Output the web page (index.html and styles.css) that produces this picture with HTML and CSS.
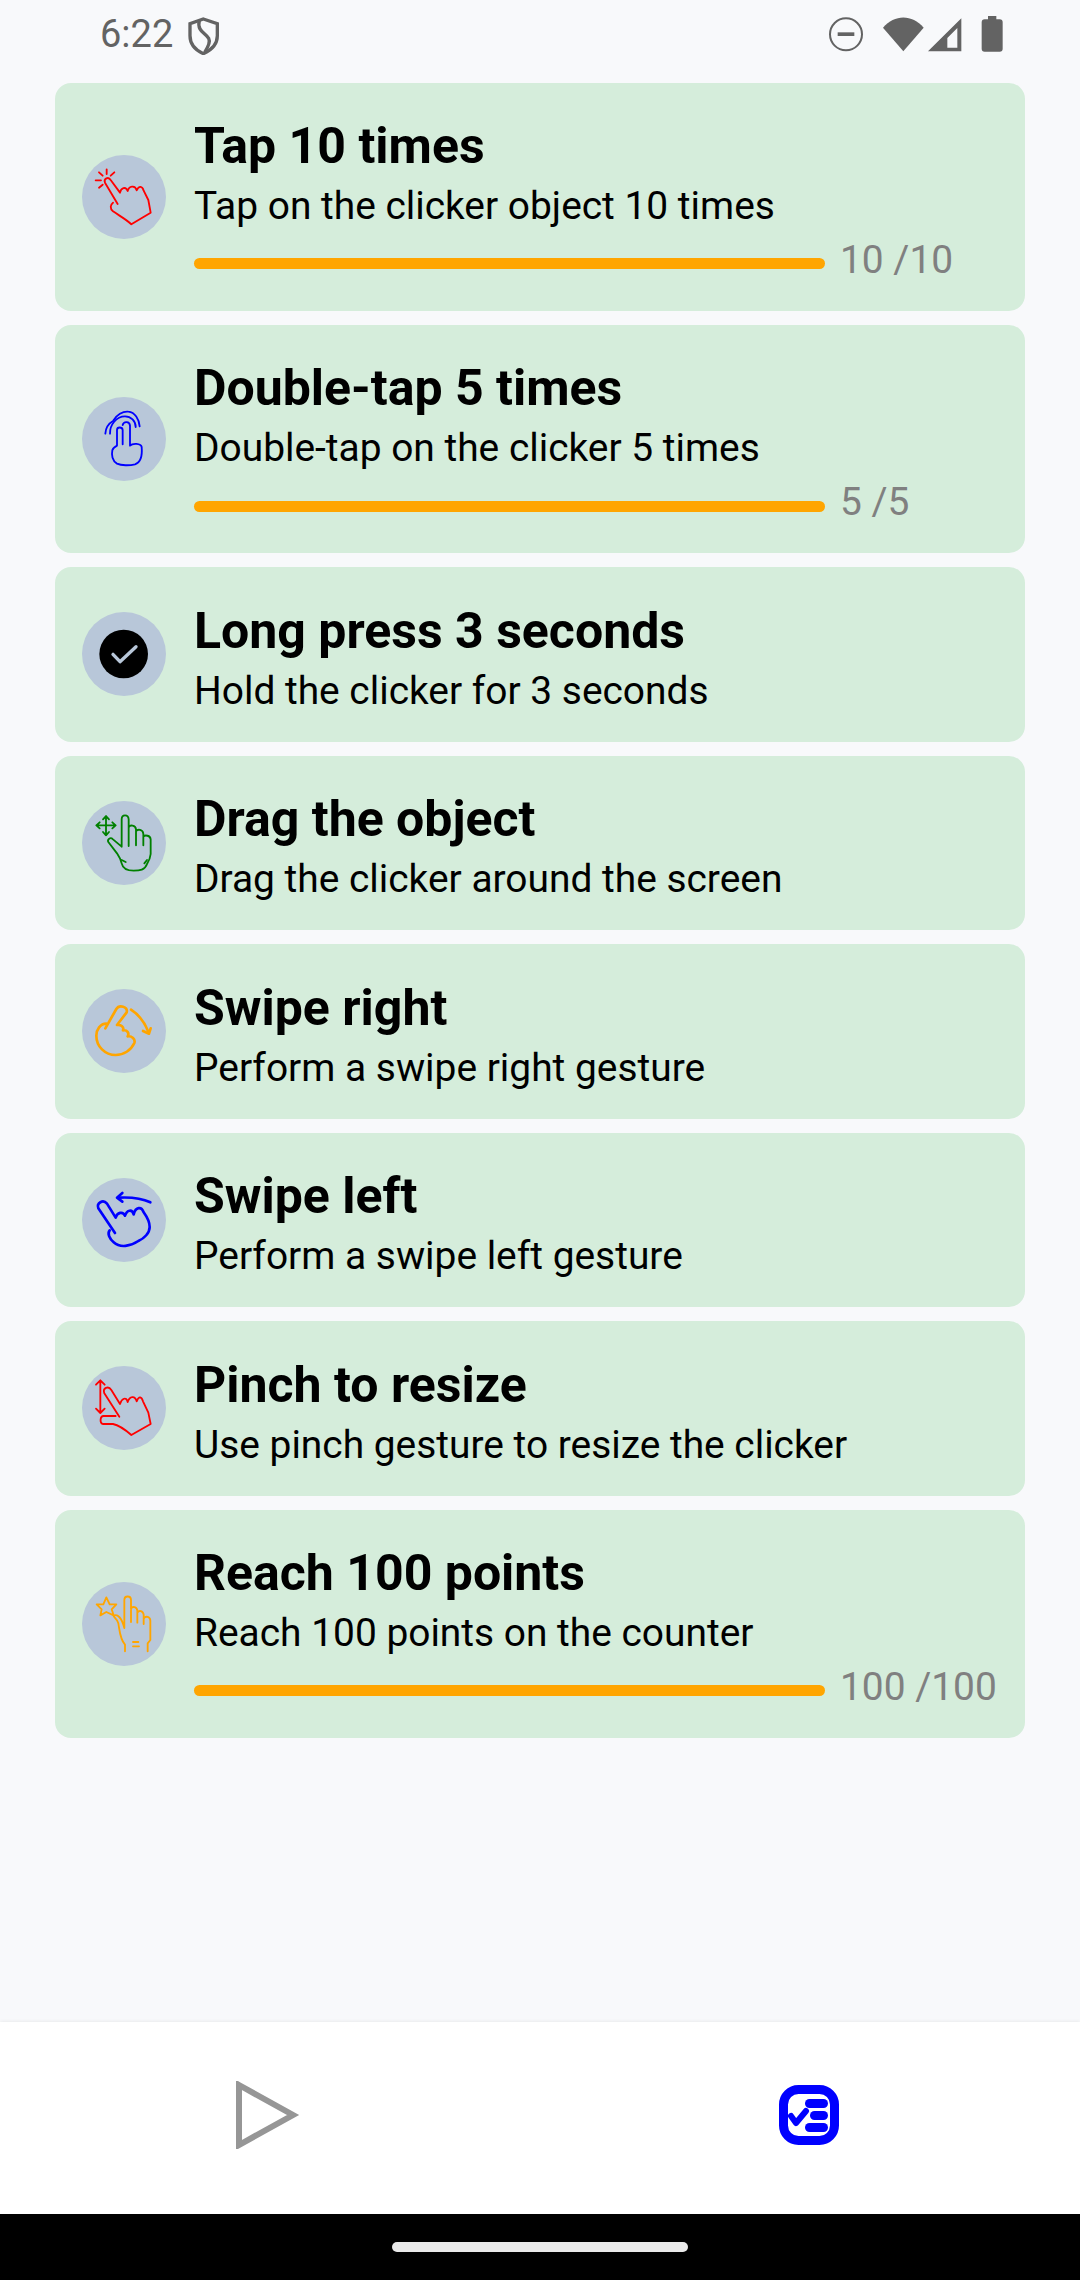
FILE: index.html
```html
<!DOCTYPE html>
<html lang="en">
<head>
    <meta charset="UTF-8">
    <title>Achievements</title>
    <link rel="stylesheet" href="styles.css">
</head>
<body>
    <div class="screen">
        <div class="status-bar">
            <span class="time">6:22</span>
            <svg class="shield" viewBox="326 48 96 114">
                <path d="M372 54 L414 68 V104 C414 130 394 148 372 158 C350 148 332 130 332 104 V68 Z" fill="none" stroke="#636363" stroke-width="10"/>
                <path d="M360 58 C352 90 378 96 388 112 C394 124 384 142 376 154" fill="none" stroke="#636363" stroke-width="10"/>
            </svg>
            <svg class="status-icons" viewBox="268 48 522 108">
                <circle cx="319" cy="103" r="48" fill="none" stroke="#636363" stroke-width="6"/>
                <rect x="294" y="97" width="50" height="11" fill="#636363"/>
                <path d="M430 83 C465 42 517 42 552 83 L491 154 Z" fill="#636363"/>
                <path d="M665 55 V154 H565 Z M653 84 L623 114 V143 H653 Z" fill="#636363" fill-rule="evenodd"/>
                <path d="M745 48 H770 V58 H780 Q789 58 789 67 V146 Q789 155 780 155 H735 Q726 155 726 146 V67 Q726 58 735 58 H745 Z" fill="#636363"/>
            </svg>
        </div>

        <div class="list">
            <div class="card">
                <div class="badge">
                    <svg viewBox="67 75 252 252" class="ico ico-red">
                        <path d="M174 222 L136 158 C131 146 146 138 153 150 L181 188 C184 174 198 168 204 183 C208 168 226 164 231 181 C238 166 248 168 252 182 L266 210 L273 248 L215 283 C200 268 180 258 160 244 C150 236 152 224 160 218"/>
                        <path d="M141 118 V132 M118 127 L129 137 M164 127 L153 137 M108 151 H124 M118 173 L129 164"/>
                    </svg>
                </div>
                <div class="info">
                    <div class="title">Tap 10 times</div>
                    <div class="desc">Tap on the clicker object 10 times</div>
                    <div class="progress-row">
                        <div class="bar"></div>
                        <span class="count">10 /10</span>
                    </div>
                </div>
            </div>

            <div class="card">
                <div class="badge">
                    <svg viewBox="67 66 252 252" class="ico ico-blue">
                        <path d="M172 210 V165 C172 155 188 155 189 165 V208 M189 150 C192 138 210 138 211 152 V212 C218 204 244 204 246 216 C248 240 244 262 226 268 C210 272 185 272 172 266 C158 258 155 240 158 226 C160 218 168 214 172 212"/>
                        <path d="M151 176 C150 150 170 124 196 124 C214 124 228 138 228 156"/>
                        <path d="M137 176 C138 160 146 146 160 138 C170 120 190 108 206 110 C226 112 238 132 240 154"/>
                    </svg>
                </div>
                <div class="info">
                    <div class="title">Double-tap 5 times</div>
                    <div class="desc">Double-tap on the clicker 5 times</div>
                    <div class="progress-row">
                        <div class="bar"></div>
                        <span class="count">5 /5</span>
                    </div>
                </div>
            </div>

            <div class="card">
                <div class="badge">
                    <svg viewBox="67 66 252 252" class="ico">
                        <circle cx="192" cy="192" r="73" fill="#000" stroke="none"/>
                        <path d="M160 193 L181 215 L229 170" stroke="#b8c7d9" stroke-width="10" stroke-linecap="round" stroke-linejoin="round"/>
                    </svg>
                </div>
                <div class="info">
                    <div class="title">Long press 3 seconds</div>
                    <div class="desc">Hold the clicker for 3 seconds</div>
                </div>
            </div>

            <div class="card">
                <div class="badge">
                    <svg viewBox="67 75 252 252" class="ico ico-green">
                        <path d="M186 212 V130 C186 114 206 114 207 130 V210 M207 154 C210 146 228 146 229 160 V208 M229 166 C234 158 250 160 251 174 V208 M251 182 C256 176 272 178 273 190 V234 C272 246 268 254 262 264 C256 282 240 284 222 284 C204 284 190 280 186 262 C184 252 180 244 172 232 L146 198 C142 190 152 182 160 190 L186 212"/>
                        <path d="M186 252 L198 258 M262 252 L254 262"/>
                        <path d="M139 122 V178 M110 148 H168 M130 130 L139 120 L148 130 M130 168 L139 178 L148 168 M120 139 L110 148 L120 157 M158 139 L168 148 L158 157"/>
                    </svg>
                </div>
                <div class="info">
                    <div class="title">Drag the object</div>
                    <div class="desc">Drag the clicker around the screen</div>
                </div>
            </div>

            <div class="card">
                <div class="badge">
                    <svg viewBox="67 72 252 252" class="ico ico-orange ico-thick">
                        <path d="M137 190 L170 132 C178 118 206 124 201 142 L172 180 C184 178 194 186 190 196 C202 194 210 204 204 214 C216 212 228 222 224 234 C214 256 192 270 168 270 C136 270 110 244 110 212 C110 194 122 176 140 176"/>
                        <path d="M214 134 C236 148 254 170 266 200"/>
                        <path d="M250 198 L268 206 L273 190"/>
                    </svg>
                </div>
                <div class="info">
                    <div class="title">Swipe right</div>
                    <div class="desc">Perform a swipe right gesture</div>
                </div>
            </div>

            <div class="card">
                <div class="badge">
                    <svg viewBox="67 69 252 252" class="ico ico-blue ico-thick">
                        <path d="M166 234 L116 160 C110 144 130 132 142 146 L168 188 C172 172 190 168 196 182 C202 164 218 162 222 178 C228 154 246 154 252 172 C262 186 270 200 270 216 C270 234 254 250 236 258 C212 274 182 280 162 262 C150 252 142 236 150 226"/>
                        <path d="M272 142 C246 130 216 126 178 128"/>
                        <path d="M188 114 L172 128 L188 140"/>
                    </svg>
                </div>
                <div class="info">
                    <div class="title">Swipe left</div>
                    <div class="desc">Perform a swipe left gesture</div>
                </div>
            </div>

            <div class="card">
                <div class="badge">
                    <svg viewBox="67 66 252 252" class="ico ico-red">
                        <path d="M179 218 L134 148 C128 132 146 124 155 138 L181 180 C186 164 200 156 204 174 C210 156 226 154 231 172 C238 154 246 158 250 172 L266 206 L273 240 L215 273 C200 260 180 244 160 240 H130 C120 240 120 216 132 216 H168"/>
                        <path d="M122 112 V204 M109 122 L122 109 L135 122 M109 194 L122 207 L135 194"/>
                    </svg>
                </div>
                <div class="info">
                    <div class="title">Pinch to resize</div>
                    <div class="desc">Use pinch gesture to resize the clicker</div>
                </div>
            </div>

            <div class="card">
                <div class="badge">
                    <svg viewBox="67 66 252 252" class="ico ico-orange">
                        <path d="M194 204 V120 C194 106 214 106 214 120 V186 M214 146 C218 138 232 140 233 152 V188 M233 158 C238 150 250 152 252 164 V192 M252 176 C258 166 272 170 272 182 V240 L264 250 V274 M196 274 V254 C180 236 180 210 176 190 C172 176 160 170 162 168 C172 160 186 172 194 204"/>
                        <path d="M220 246 H236 M220 259 H238"/>
                        <path d="M140 112 L150 133 L170 133 L156 148 L162 166 L140 156 L122 166 L126 148 L111 133 L131 133 Z"/>
                    </svg>
                </div>
                <div class="info">
                    <div class="title">Reach 100 points</div>
                    <div class="desc">Reach 100 points on the counter</div>
                    <div class="progress-row">
                        <div class="bar"></div>
                        <span class="count">100 /100</span>
                    </div>
                </div>
            </div>
        </div>

        <div class="bottom-nav">
            <svg class="nav-play" viewBox="0 0 64 68">
                <path d="M3 4 L57 34 L3 64 Z" fill="none" stroke="#969696" stroke-width="6"/>
            </svg>
            <svg class="nav-tasks" viewBox="0 0 60 60">
                <rect x="4.5" y="4.5" width="51" height="51" rx="15" fill="none" stroke="#0000ff" stroke-width="9"/>
                <rect x="26" y="14" width="23" height="9" rx="4.5" fill="#0000ff"/>
                <rect x="31" y="26" width="18" height="9" rx="4.5" fill="#0000ff"/>
                <rect x="26" y="38" width="23" height="9" rx="4.5" fill="#0000ff"/>
                <path d="M12 31 L17 38 L27 26" fill="none" stroke="#0000ff" stroke-width="6" stroke-linecap="round" stroke-linejoin="round"/>
            </svg>
        </div>

        <div class="gesture-bar">
            <div class="handle"></div>
        </div>
    </div>
</body>
</html>
```

FILE: styles.css
```css
* {
    box-sizing: border-box;
}
body {
    margin: 0;
    font-family: 'Roboto', sans-serif;
    background: #f8f9fb;
}
.screen {
    width: 1080px;
    height: 2280px;
    display: flex;
    flex-direction: column;
}
.status-bar {
    height: 83px;
    padding: 15px 77px 0 100px;
    display: flex;
    align-items: flex-start;
    flex-shrink: 0;
}
.time {
    font-size: 38px;
    line-height: 38px;
    color: #636363;
}
.shield {
    width: 32px;
    height: 38px;
    margin-left: 15px;
    margin-top: 2px;
}
.status-icons {
    width: 174px;
    height: 36px;
    margin-top: 1px;
    margin-left: auto;
}
.list {
    flex: 1;
    padding: 0 55px;
    display: flex;
    flex-direction: column;
    gap: 14.2px;
}
.card {
    background: #d5eddb;
    border-radius: 16px;
    padding: 30px 16px 30px 27px;
    display: flex;
    align-items: center;
    gap: 28px;
}
.badge {
    width: 84px;
    height: 84px;
    border-radius: 50%;
    background: #b8c7d9;
    flex-shrink: 0;
}
.ico {
    display: block;
    width: 84px;
    height: 84px;
    fill: none;
    stroke-width: 5.5;
    stroke-linecap: round;
    stroke-linejoin: round;
}
.ico-red { stroke: #ff0000; }
.ico-blue { stroke: #0000ff; }
.ico-green { stroke: #008000; }
.ico-orange { stroke: #ffa500; }
.ico-thick { stroke-width: 8; }
.info {
    flex: 1;
    padding-top: 6.3px;
}
.title {
    font-size: 50px;
    line-height: 55px;
    font-weight: 700;
    color: #000;
}
.desc {
    font-size: 38.9px;
    line-height: 43px;
    margin-top: 10px;
    color: #000;
}
.progress-row {
    display: flex;
    align-items: center;
    gap: 15px;
    margin-top: 10.7px;
    height: 43px;
}
.bar {
    width: 631px;
    height: 11px;
    margin-top: 9px;
    border-radius: 6px;
    background: #ffa500;
    flex-shrink: 0;
}
.count {
    font-size: 38.9px;
    color: #808080;
    white-space: nowrap;
}
.bottom-nav {
    height: 192px;
    background: #fff;
    box-shadow: 0 -1px 3px rgba(0, 0, 0, 0.06);
    padding-top: 59px;
    display: flex;
    align-items: flex-start;
    flex-shrink: 0;
}
.nav-play {
    width: 64px;
    height: 68px;
    margin-left: 236px;
}
.nav-tasks {
    width: 60px;
    height: 60px;
    margin-left: 479px;
    margin-top: 4px;
}
.gesture-bar {
    height: 66px;
    background: #000;
    padding-top: 28px;
    flex-shrink: 0;
}
.handle {
    width: 296px;
    height: 10px;
    margin: 0 auto;
    border-radius: 5px;
    background: #eaeaea;
}
```
